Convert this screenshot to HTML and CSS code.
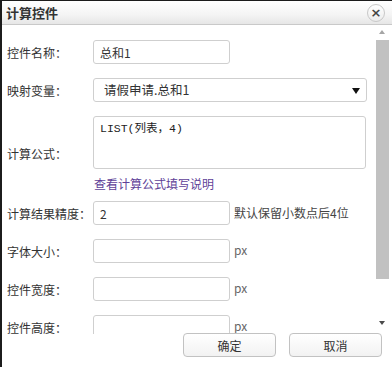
FILE: index.html
```html
<!DOCTYPE html>
<html lang="zh-CN">
<head>
    <meta charset="UTF-8">
    <meta name="viewport" content="width=device-width, initial-scale=1.0">
    <title>计算控件</title>
    <link rel="stylesheet" href="styles.css">
</head>
<body>
    <div class="dialog">
        <header class="titlebar">
            <span class="title">计算控件</span>
            <button class="close-btn" type="button">&times;</button>
        </header>

        <div class="dialog-main">
            <main class="dialog-body">
                <form class="calc-form">
                    <div class="form-row">
                        <label class="form-label">控件名称：</label>
                        <input type="text" class="text-input" value="总和1">
                    </div>

                    <div class="form-row">
                        <label class="form-label">映射变量：</label>
                        <div class="select-wrap">
                            <select class="select-input">
                                <option>请假申请.总和1</option>
                            </select>
                        </div>
                    </div>

                    <div class="form-row formula-row">
                        <label class="form-label">计算公式：</label>
                        <div class="formula-field">
                            <textarea class="formula-input">LIST(列表，4)</textarea>
                            <a href="#" class="help-link">查看计算公式填写说明</a>
                        </div>
                    </div>

                    <div class="form-row">
                        <label class="form-label">计算结果精度：</label>
                        <input type="text" class="text-input" value="2">
                        <span class="hint">默认保留小数点后4位</span>
                    </div>

                    <div class="form-row">
                        <label class="form-label">字体大小：</label>
                        <input type="text" class="text-input">
                        <span class="unit">px</span>
                    </div>

                    <div class="form-row">
                        <label class="form-label">控件宽度：</label>
                        <input type="text" class="text-input">
                        <span class="unit">px</span>
                    </div>

                    <div class="form-row">
                        <label class="form-label">控件高度：</label>
                        <input type="text" class="text-input">
                        <span class="unit">px</span>
                    </div>
                </form>
            </main>

            <!-- scrollbar of the body panel -->
            <div class="scrollbar">
                <span class="scroll-arrow up"></span>
                <div class="scroll-track">
                    <div class="scroll-thumb"></div>
                </div>
                <span class="scroll-arrow down"></span>
            </div>
        </div>

        <footer class="dialog-footer">
            <button type="button" class="btn">确定</button>
            <button type="button" class="btn">取消</button>
        </footer>
    </div>
</body>
</html>
```

FILE: styles.css
```css
* {
    margin: 0;
    padding: 0;
    box-sizing: border-box;
}

body {
    font-family: "Noto Sans CJK SC", "Liberation Sans", sans-serif;
    font-size: 12px;
    color: #333;
    background: #fff;
}

.dialog {
    width: 392px;
    height: 367px;
    border-top: 1px solid #1c1c1c;
    border-left: 2px solid #1c1c1c;
    display: flex;
    flex-direction: column;
    overflow: hidden;
}

.titlebar {
    height: 24px;
    flex-shrink: 0;
    display: flex;
    align-items: center;
    justify-content: space-between;
    padding: 0 7px 0 4px;
    background: linear-gradient(180deg, #ffffff 0%, #f4f4f4 60%, #e6e6e6 100%);
    border-bottom: 1px solid #c9c9c9;
}

.title {
    font-size: 13px;
    font-weight: 700;
    color: #333;
    line-height: 1;
}

.close-btn {
    width: 18px;
    height: 18px;
    border-radius: 50%;
    border: 1px solid #c8c8c8;
    background: linear-gradient(180deg, #ffffff, #ececec);
    color: #444;
    font-family: "DejaVu Sans", sans-serif;
    font-size: 13px;
    font-weight: 700;
    line-height: 15px;
    text-align: center;
    cursor: pointer;
}

.dialog-main {
    height: 309px;
    flex-shrink: 0;
    display: flex;
    padding-right: 3px;
}

.dialog-body {
    flex: 1;
    overflow: hidden;
}

.scrollbar {
    width: 14px;
    display: flex;
    flex-direction: column;
    align-items: center;
    padding-bottom: 4px;
}

.scroll-arrow {
    height: 14px;
    width: 100%;
    display: flex;
    align-items: center;
    justify-content: center;
}

.scroll-arrow::before {
    content: "";
    border-left: 3.5px solid transparent;
    border-right: 3.5px solid transparent;
}

.scroll-arrow.up::before {
    border-bottom: 4px solid #a5a5a5;
}

.scroll-arrow.down::before {
    border-top: 4px solid #4a4a4a;
}

.scroll-track {
    flex: 1;
    width: 100%;
    padding-left: 1px;
    padding-top: 1px;
}

.scroll-thumb {
    height: 239px;
    background: #c1c1c1;
}

.calc-form {
    padding: 15px 0 0 5px;
}

.form-row {
    display: flex;
    align-items: center;
    margin-bottom: 14px;
}

.formula-row {
    margin-bottom: 10px;
}

.form-label {
    width: 86px;
    flex-shrink: 0;
    line-height: 16px;
    padding-top: 1px;
    color: #333;
    white-space: nowrap;
}

.text-input,
.select-input,
.formula-input {
    font-family: "Noto Sans CJK SC", "Liberation Sans", sans-serif;
    font-size: 12px;
    color: #333;
    border: 1px solid #cfcfcf;
    border-radius: 3px;
    background: #fff;
    outline: none;
}

.text-input {
    width: 137px;
    height: 24px;
    flex-shrink: 0;
    padding: 0 6px;
    line-height: 22px;
}

.select-wrap {
    position: relative;
    width: 274px;
}

.select-input {
    width: 100%;
    height: 24px;
    padding: 0 20px 0 10px;
    line-height: 22px;
    appearance: none;
    font-size: 12.5px;
}

.select-wrap::after {
    content: "";
    position: absolute;
    right: 7px;
    top: 10px;
    border-left: 4px solid transparent;
    border-right: 4px solid transparent;
    border-top: 6px solid #111;
}

.formula-field {
    display: flex;
    flex-direction: column;
}

.formula-input {
    width: 273px;
    height: 53px;
    padding: 4px 6px;
    resize: none;
    font-family: "Liberation Mono", "Noto Sans CJK SC", monospace;
    font-size: 11.5px;
    line-height: 16px;
    color: #222;
}

.help-link {
    margin-top: 8px;
    padding-left: 1px;
    line-height: 14px;
    color: #5e3f98;
    text-decoration: none;
}

.hint,
.unit {
    margin-left: 4px;
    white-space: nowrap;
}

.hint {
    line-height: 16px;
    color: #444;
}

.unit {
    align-self: flex-start;
    margin-top: 5px;
    line-height: 12px;
    color: #666;
}

.dialog-footer {
    flex: 1;
    display: flex;
    justify-content: flex-end;
    align-items: flex-start;
    gap: 13px;
    margin-top: -1px;
    padding: 0 10px 0 0;
}

.btn {
    width: 93px;
    height: 24px;
    border: 1px solid #c2c2c2;
    border-radius: 4px;
    background: linear-gradient(180deg, #ffffff 0%, #f2f2f2 100%);
    font-family: "Noto Sans CJK SC", "Liberation Sans", sans-serif;
    font-size: 12px;
    color: #333;
    cursor: pointer;
}
```
